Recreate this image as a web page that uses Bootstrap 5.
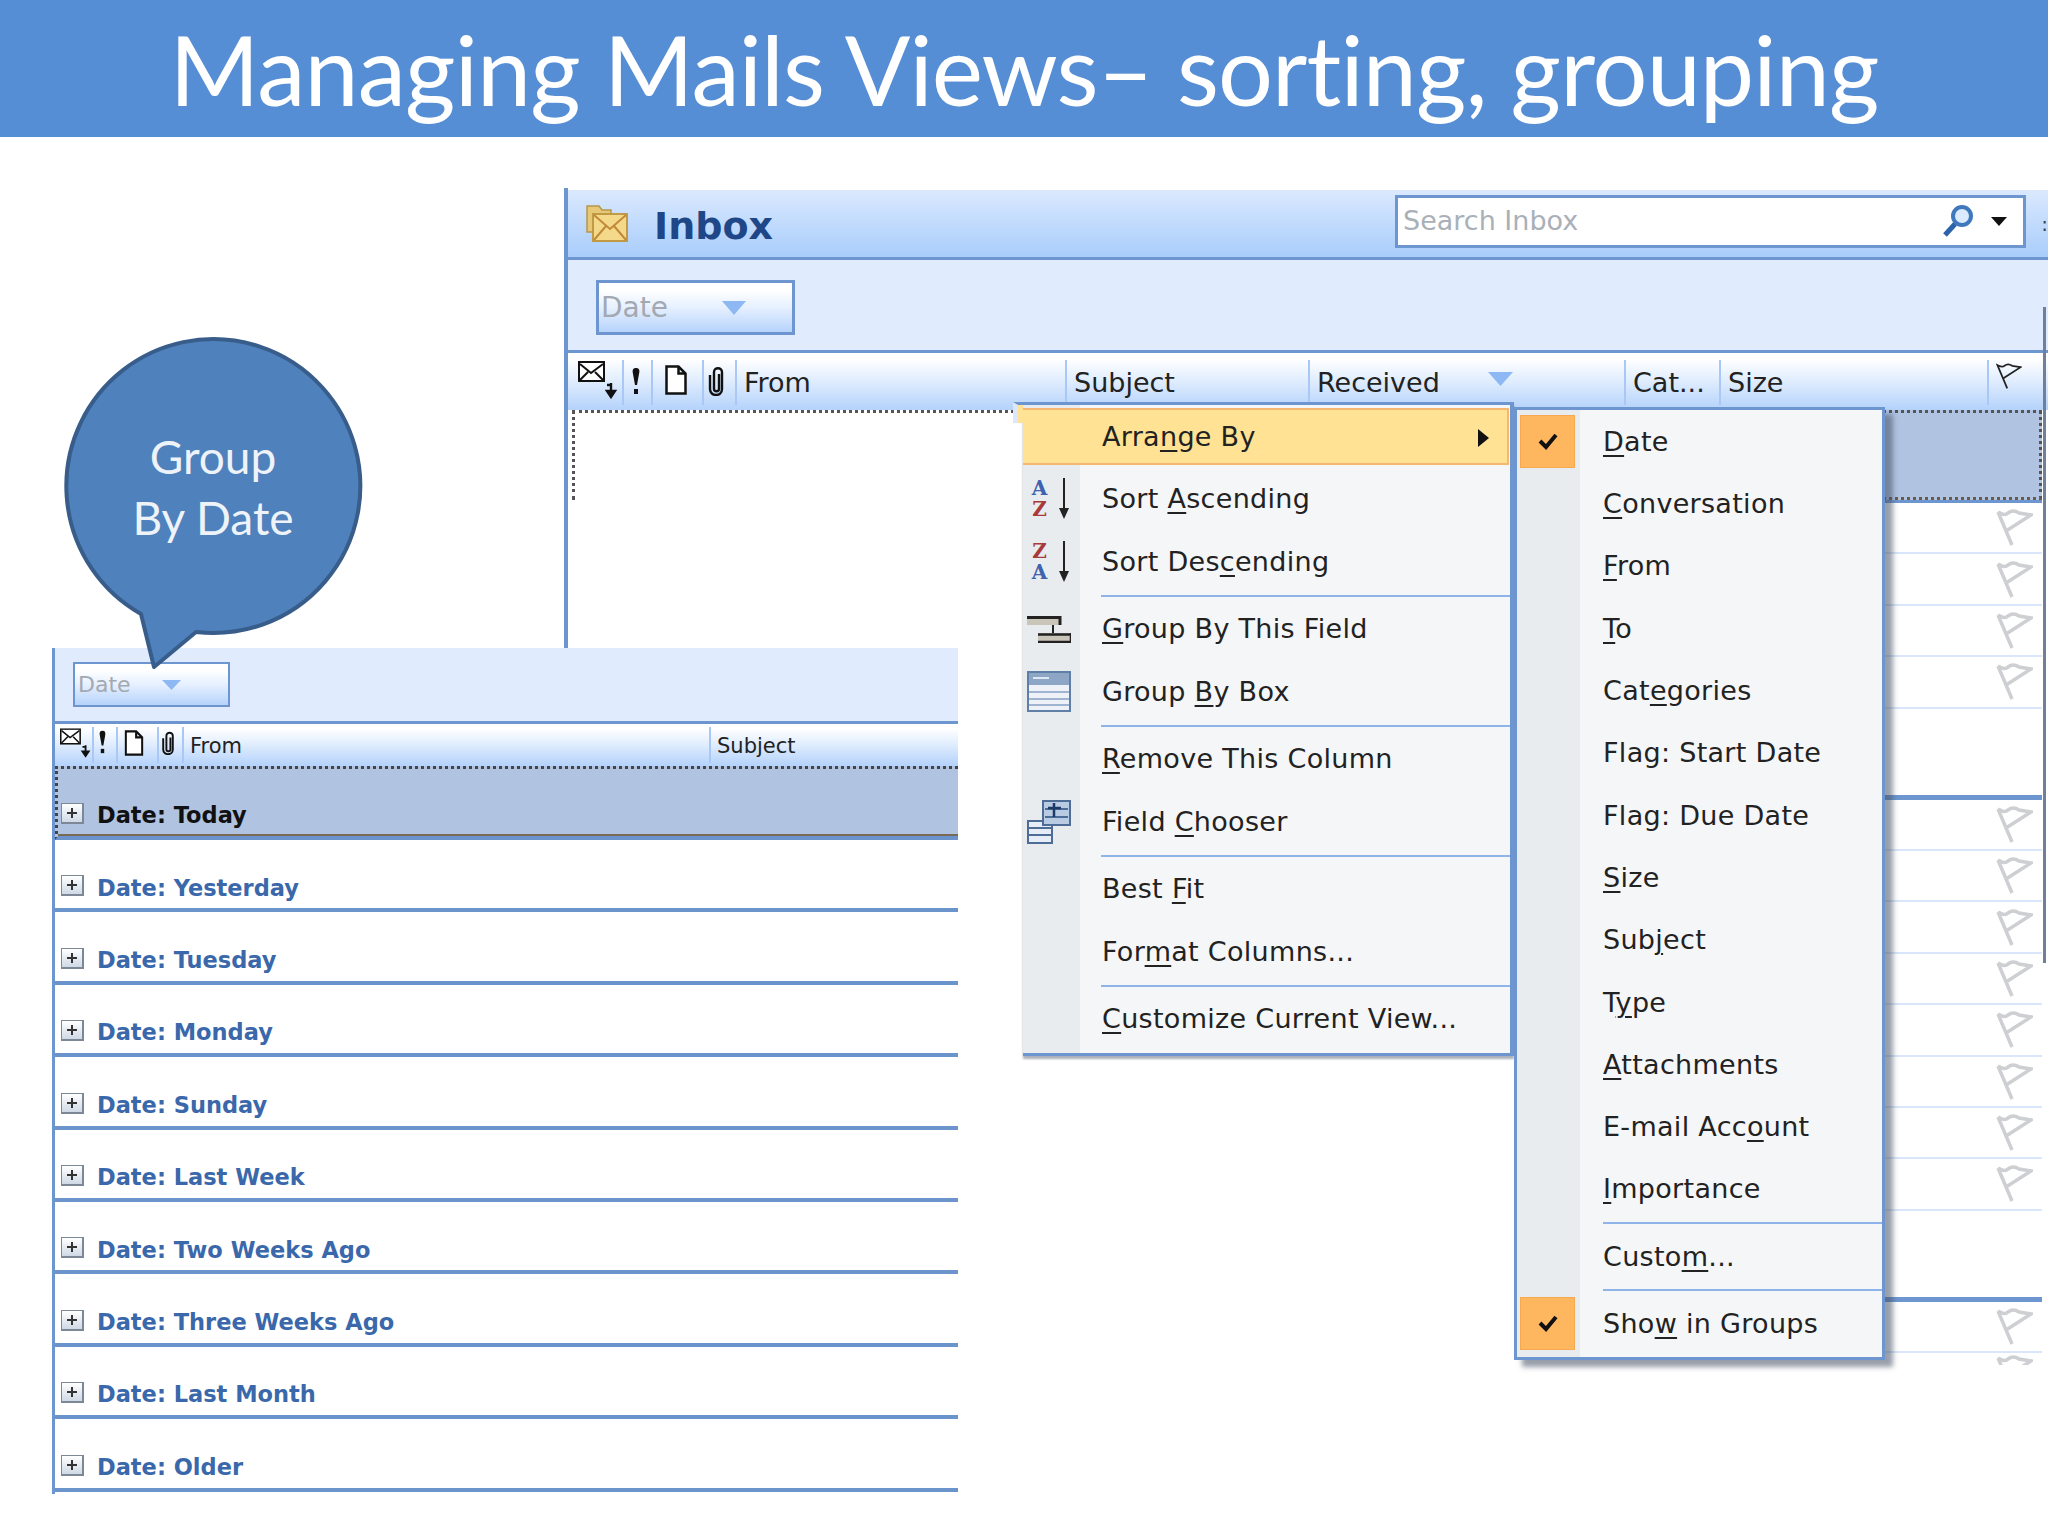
<!DOCTYPE html>
<html lang="en">
<head>
<meta charset="utf-8">
<title>Managing Mails Views</title>
<link href="https://cdn.jsdelivr.net/npm/bootstrap@5.3.0/dist/css/bootstrap.min.css" rel="stylesheet">
<style>
body{margin:0;background:#fff;font-family:"DejaVu Sans",sans-serif;color:#222}
.slide{position:relative;width:2048px;height:1536px;overflow:hidden;background:#fff}
.title-bar{height:137px;background:#558ed5;color:#fff;font-family:Lato,sans-serif;font-size:97px;line-height:137px;letter-spacing:-.9px;white-space:nowrap}
.inbox{left:564px;top:188px;width:1484px;height:1179px;padding-top:2px;border-left:4px solid #6d96d0;overflow:hidden;background:#fff}
.in-head{height:70px;background:linear-gradient(#dbe9fe,#a8cdfb);border-bottom:3px solid #6d96d0}
.in-title{font-size:38px;font-weight:700;color:#1f4788;line-height:1;margin:4px 0 0 25px}
.folder{margin:-4px 0 0 17px;width:44px;height:44px}
.search-box{width:631px;height:53px;margin:-5px 0 0 auto;background:#fff;border:3px solid #6d96d0;font-size:27px;color:#aab0b8;padding-left:5px}
.search-dots{width:22px;text-align:right;color:#445;font-size:20px;line-height:1}
.in-tools{height:93px;background:#e0ebfe;border-bottom:3px solid #6d96d0;padding-left:28px}
.view-btn{width:199px;height:55px;margin-top:5px;border:3px solid #6d96d0;background:linear-gradient(#fff 15%,#e6f0ff 50%,#b6d3fb);color:#a3a9b2;font-size:28px;padding-left:2px}
.tri-a{width:24px;height:14px;margin-left:54px}
.col-head{height:57px;background:linear-gradient(#fff 10%,#e3effe 45%,#b4d2fb);font-size:27px}
.col-cell{height:100%;padding:8px 0 0 9px;flex:none;color:#222;position:relative}
.col-cell+.col-cell::before{content:"";position:absolute;left:0;top:7px;bottom:5px;width:2px;background:#a9c8f5}
.w-mail{width:54px;padding-left:10px}.w-imp{width:29px}.w-doc{width:51px}.w-clip{width:33px;padding-left:6px}
.w-from,.w-subj,.w-recv,.w-cat,.w-size{padding-top:10px}
.w-from{width:330px}.w-subj{width:243px}.w-recv{width:316px}.w-cat{width:95px}.w-size{width:268px}.w-fl{width:53px}
.in-list{padding:0 6px 0 4px}
.sel-row{height:90px;margin-bottom:3px}
.sel-blank{border-top:3px dotted #555;border-left:3px dotted #555;background:#fff}
.sel-fill{width:560px;flex:none;background:#b0c4e2;border-top:3px dotted #555;border-right:3px dotted #555;border-bottom:3px dotted #6a5a4a;box-shadow:0 3px 0 #6d96d0}
.flag-row{height:51.4px;width:170px;border-bottom:2px solid #d9e6fb;padding-right:9px}
.flag-row svg{width:37px;height:37px}
.gap-row{height:91px;width:170px;border-bottom:5px solid #6d96d0}
.clip-row{height:12px;width:170px;overflow:hidden;padding:2px 9px 0 0}
.clip-row svg{width:37px;height:37px}
.scroll-edge{right:2px;top:119px;width:3px;height:656px;background:#6f7f9c}
.group-panel{left:52px;top:648px;width:906px;height:846px;background:#fff;border-left:3px solid #6d96d0}
.gp-tools{height:76px;background:#e0ebfe;border-bottom:3px solid #6d96d0;padding-left:18px}
.gp-btn{width:157px;height:45px;border:2px solid #6d96d0;background:linear-gradient(#fff 15%,#e6f0ff 50%,#b6d3fb);color:#a3a9b2;font-size:22px;padding-left:3px}
.tri-b{width:19px;height:10px;margin-left:31px}
.gp-head{height:42px;background:linear-gradient(#fff 10%,#e3effe 45%,#b4d2fb);font-size:21px}
.gc{height:100%;flex:none;padding:7px 0 0 8px;position:relative;color:#222}
.gc+.gc::before{content:"";position:absolute;left:0;top:3px;bottom:3px;width:2px;background:#a9c8f5}
.g1{width:37px;padding-left:5px}.g2{width:24px;padding-left:6px}.g3{width:41px;padding-left:8px}.g4{width:25px;padding-left:4px}.g5{width:527px}.g6{width:249px}
.gp-row{height:72.4px;padding:0 0 3px 6px;border-bottom:4px solid #6c94cc;font-size:22.5px;font-weight:700;color:#3a68ab}
.gp-row.now{height:74px;background:#b0c4e2;color:#111;border-top:3px dotted #444;border-left:3px dotted #444;padding-left:3px;box-shadow:inset 0 -3px 0 -1px #7a6a55}
.plus{width:23px;height:21px;margin:0 13px 9px 0;flex:none;border:1px solid #7d8896;border-right-width:2px;border-bottom-width:2px;background:linear-gradient(#fff,#cfd9e6)}
.plus svg{display:block;width:100%;height:100%}
.bubble{left:60px;top:335px;width:310px;height:340px;color:#eef3fa;font-family:Lato,sans-serif;font-size:46px;line-height:61px}
.bubble svg{left:0;top:0;width:100%;height:100%}
.bubble-text{left:0;top:91px;width:306px}
.ol-menu.dropdown-menu{min-width:0;border-radius:0;padding:0;margin:0;font-size:27px;letter-spacing:.3px;color:#222}
.menu-a{left:1023px;top:402px;width:491px;height:654px;border:0;border-top:3px solid #6d96d0;border-right:4px solid #6d96d0;border-bottom:3px solid #6d96d0;background:linear-gradient(90deg,#e9ecee 57px,#f5f6f8 57px);box-shadow:0 3px 2px rgba(70,80,100,.45)}
.menu-a::before{content:"";position:absolute;left:-10px;top:-3px;width:10px;height:21px;background:#ffe293;border-top:3px solid #6d96d0;border-left:5px solid #dbe7fc}
.menu-b{left:1514px;top:407px;width:371px;height:953px;border:3px solid #6d96d0;border-left-width:3px;background:linear-gradient(90deg,#e9ecee 63px,#f5f6f8 63px);box-shadow:8px 7px 5px rgba(70,80,100,.55)}
.ol-menu .dropdown-item{display:flex;align-items:center;padding:0;color:#222;background:none;white-space:nowrap}
.menu-a .dropdown-item{height:62.5px}
.menu-b .dropdown-item{height:62.3px}
.menu-a .dropdown-item.hot{height:57px;margin:3px 0 3px 0;width:486px;background:#ffe293;border:2px solid #f6b870;border-left:0;position:relative}
.menu-a .hot .m-tx,.menu-b .m-tx{padding-top:2px}
.m-ic{width:57px;flex:none;height:100%;display:flex;align-items:center;justify-content:center;padding-right:6px}
.m-tx{margin-left:22px}
.m-tx u{text-decoration-thickness:2px;text-underline-offset:4px}
.m-ck{width:55px;height:53px;margin-left:3px;flex:none;display:flex;align-items:center;justify-content:center}
.m-ck.on{background:#ffb75f;border:1px solid #f7a950}
.menu-b .m-tx{margin-left:28px}
.ol-menu .dropdown-divider{height:5px;margin:0;border:0;opacity:1;background:linear-gradient(#8fb4ea,#8fb4ea) 0 2px/100% 2px no-repeat}
.menu-a .dropdown-divider{margin-left:78px}
.menu-b .dropdown-divider{margin-left:86px}
.sub-tri{right:18px;top:19px;width:11px;height:18px}
.az{width:26px;font-family:"DejaVu Serif",serif;font-weight:700;font-size:20px;line-height:21px;text-align:center;letter-spacing:0}
.az .blu{color:#3c62b0}.az .red{color:#a93a3a}
.az-arrow{width:14px;height:42px;margin-left:4px}
</style>
</head>
<body>
<svg width="0" height="0" class="position-absolute">
  <symbol id="flag" viewBox="0 0 37 37"><path d="M16 36 2 3M2 3c4 2 7 4 10 1 4-3 8-2 11 0l12 2-25 16" fill="none" stroke="#cdcfd2" stroke-width="3.500"/></symbol>
  <symbol id="check" viewBox="0 0 20 18"><path d="M2 9l6 6L18 3" fill="none" stroke="#111" stroke-width="4"/></symbol>
  <symbol id="mail" viewBox="0 0 40 38"><rect x="1" y="1" width="25" height="19" fill="#fff" stroke="#111" stroke-width="2"/><path d="M2 3l11 9L25 3M2 19l8-8M25 19l-8-8" fill="none" stroke="#111" stroke-width="2"/><path d="M33 22v12M29 24h4M29 30l4 6 4-6z" fill="#111" stroke="#111" stroke-width="2.400"/></symbol>
  <symbol id="imp" viewBox="0 0 10 28"><path d="M5 1c3 0 4 2 3 6L6 18H4L2 7C1 3 2 1 5 1z" fill="#111"/><rect x="3" y="22" width="4" height="5" fill="#111"/></symbol>
  <symbol id="doc" viewBox="0 0 22 30"><path d="M1.500 1.500h12l7 7v20h-19zM13.500 1.500v7h7" fill="#fff" stroke="#111" stroke-width="2.500"/></symbol>
  <symbol id="clip" viewBox="0 0 16 30"><path d="M11 8v15c0 3-5 3-5 0V6c0-5 8-5 8 0v17c0 8-12 8-12 0V9" fill="none" stroke="#111" stroke-width="2.400"/></symbol>
  <symbol id="plus" viewBox="0 0 20 18"><path d="M10 4v10M5 9h10" stroke="#333" stroke-width="2"/></symbol>
  <symbol id="down" viewBox="0 0 14 42"><path d="M7 0v34" stroke="#222" stroke-width="2"/><path d="M2 30h10l-5 11z" fill="#222"/></symbol>
</svg>

<div class="slide">
  <header class="title-bar text-center">Managing Mails Views– sorting, grouping</header>

  <section class="inbox position-absolute">
    <div class="in-head d-flex align-items-center">
      <svg class="folder" viewBox="0 0 44 44"><path d="M2 6h12l3 4h9v22H2z" fill="#e6c877" stroke="#b6964c" stroke-width="1.500"/><rect x="8" y="14" width="34" height="27" fill="#f4d98a" stroke="#c09a45" stroke-width="2"/><path d="M9 15l16 14L41 15M9 40l12-14M41 40 29 26" fill="none" stroke="#c08a3a" stroke-width="2"/></svg>
      <span class="in-title">Inbox</span>
      <div class="search-box d-flex align-items-center">
        <span class="flex-grow-1">Search Inbox</span>
        <svg width="34" height="34" viewBox="0 0 34 34" class="me-3"><circle cx="21" cy="12" r="9" fill="#dbeafe" stroke="#3f78bd" stroke-width="4"/><path d="M14 20 4 31" stroke="#2d63a8" stroke-width="5"/></svg>
        <svg width="16" height="9" viewBox="0 0 16 9" class="me-3"><path d="M0 0h16L8 9z" fill="#111"/></svg>
      </div>
      <span class="search-dots">:</span>
    </div>
    <div class="in-tools d-flex align-items-center">
      <div class="view-btn d-flex align-items-center"><span>Date</span><svg class="tri-a" viewBox="0 0 24 14"><path d="M0 0h24L12 14z" fill="#8db8f3"/></svg></div>
    </div>
    <div class="col-head d-flex">
      <div class="col-cell w-mail"><svg width="40" height="38" style="display:block"><use href="#mail"/></svg></div>
      <div class="col-cell w-imp"><svg width="10" height="28" style="display:block;margin-top:6px"><use href="#imp"/></svg></div>
      <div class="col-cell w-doc"><svg width="22" height="30" style="display:block;margin:4px 0 0 5px"><use href="#doc"/></svg></div>
      <div class="col-cell w-clip"><svg width="16" height="30" style="display:block;margin-top:5px"><use href="#clip"/></svg></div>
      <div class="col-cell w-from">From</div>
      <div class="col-cell w-subj">Subject</div>
      <div class="col-cell w-recv d-flex">Received<svg width="25" height="14" viewBox="0 0 25 14" style="margin:9px 0 0 48px"><path d="M0 0h25L12.500 14z" fill="#8db8f3"/></svg></div>
      <div class="col-cell w-cat">Cat...</div>
      <div class="col-cell w-size">Size</div>
      <div class="col-cell w-fl"><svg width="26" height="30" viewBox="0 0 37 37" style="display:block"><path d="M16 36 2 3c4 2 7 4 10 1 4-3 8-2 11 0l12 2-25 16" fill="none" stroke="#222" stroke-width="2.500"/></svg></div>
    </div>
    <div class="in-list">
      <div class="sel-row d-flex"><div class="sel-blank flex-grow-1"></div><div class="sel-fill"></div></div>
      <div class="flag-row ms-auto d-flex align-items-center justify-content-end"><svg><use href="#flag"/></svg></div>
      <div class="flag-row ms-auto d-flex align-items-center justify-content-end"><svg><use href="#flag"/></svg></div>
      <div class="flag-row ms-auto d-flex align-items-center justify-content-end"><svg><use href="#flag"/></svg></div>
      <div class="flag-row ms-auto d-flex align-items-center justify-content-end"><svg><use href="#flag"/></svg></div>
      <div class="gap-row ms-auto"></div>
      <div class="flag-row ms-auto d-flex align-items-center justify-content-end"><svg><use href="#flag"/></svg></div>
      <div class="flag-row ms-auto d-flex align-items-center justify-content-end"><svg><use href="#flag"/></svg></div>
      <div class="flag-row ms-auto d-flex align-items-center justify-content-end"><svg><use href="#flag"/></svg></div>
      <div class="flag-row ms-auto d-flex align-items-center justify-content-end"><svg><use href="#flag"/></svg></div>
      <div class="flag-row ms-auto d-flex align-items-center justify-content-end"><svg><use href="#flag"/></svg></div>
      <div class="flag-row ms-auto d-flex align-items-center justify-content-end"><svg><use href="#flag"/></svg></div>
      <div class="flag-row ms-auto d-flex align-items-center justify-content-end"><svg><use href="#flag"/></svg></div>
      <div class="flag-row ms-auto d-flex align-items-center justify-content-end"><svg><use href="#flag"/></svg></div>
      <div class="gap-row ms-auto"></div>
      <div class="flag-row ms-auto d-flex align-items-center justify-content-end"><svg><use href="#flag"/></svg></div>
      <div class="clip-row ms-auto d-flex justify-content-end align-items-start"><svg><use href="#flag"/></svg></div>
    </div>
    <div class="scroll-edge position-absolute"></div>
  </section>

  <section class="group-panel position-absolute">
    <div class="gp-tools d-flex align-items-center">
      <div class="gp-btn d-flex align-items-center"><span>Date</span><svg class="tri-b" viewBox="0 0 19 10"><path d="M0 0h19L9.500 10z" fill="#8db8f3"/></svg></div>
    </div>
    <div class="gp-head d-flex">
      <div class="gc g1"><svg width="31" height="30" viewBox="0 0 40 38" style="display:block;margin-top:-3px"><use href="#mail"/></svg></div>
      <div class="gc g2"><svg width="9" height="24" style="display:block;margin-top:-1px" viewBox="0 0 10 28"><use href="#imp"/></svg></div>
      <div class="gc g3"><svg width="20" height="26" viewBox="0 0 22 30" style="display:block;margin-top:-1px"><use href="#doc"/></svg></div>
      <div class="gc g4"><svg width="14" height="24" viewBox="0 0 16 30" style="display:block"><use href="#clip"/></svg></div>
      <div class="gc g5">From</div>
      <div class="gc g6">Subject</div>
    </div>
    <div class="gp-row now d-flex align-items-end"><span class="plus"><svg><use href="#plus"/></svg></span><span>Date: Today</span></div>
    <div class="gp-row d-flex align-items-end"><span class="plus"><svg><use href="#plus"/></svg></span><span>Date: Yesterday</span></div>
    <div class="gp-row d-flex align-items-end"><span class="plus"><svg><use href="#plus"/></svg></span><span>Date: Tuesday</span></div>
    <div class="gp-row d-flex align-items-end"><span class="plus"><svg><use href="#plus"/></svg></span><span>Date: Monday</span></div>
    <div class="gp-row d-flex align-items-end"><span class="plus"><svg><use href="#plus"/></svg></span><span>Date: Sunday</span></div>
    <div class="gp-row d-flex align-items-end"><span class="plus"><svg><use href="#plus"/></svg></span><span>Date: Last Week</span></div>
    <div class="gp-row d-flex align-items-end"><span class="plus"><svg><use href="#plus"/></svg></span><span>Date: Two Weeks Ago</span></div>
    <div class="gp-row d-flex align-items-end"><span class="plus"><svg><use href="#plus"/></svg></span><span>Date: Three Weeks Ago</span></div>
    <div class="gp-row d-flex align-items-end"><span class="plus"><svg><use href="#plus"/></svg></span><span>Date: Last Month</span></div>
    <div class="gp-row d-flex align-items-end"><span class="plus"><svg><use href="#plus"/></svg></span><span>Date: Older</span></div>
  </section>

  <aside class="bubble position-absolute text-center">
    <svg class="position-absolute" viewBox="60 335 310 340"><path d="M196 632 154 667 141 614A147 147 0 1 1 196 632Z" fill="#4f81bd" stroke="#385d8a" stroke-width="4" stroke-linejoin="round"/></svg>
    <div class="bubble-text position-absolute">Group<br>By Date</div>
  </aside>

  <ul class="dropdown-menu show ol-menu menu-a position-absolute list-unstyled">
    <li class="dropdown-item hot"><span class="m-ic"></span><span class="m-tx">Arra<u>n</u>ge By</span><svg class="sub-tri position-absolute" viewBox="0 0 11 18"><path d="M0 0l11 9L0 18z" fill="#111"/></svg></li>
    <li class="dropdown-item"><span class="m-ic"><span class="az"><span class="blu d-block">A</span><span class="red d-block">Z</span></span><svg class="az-arrow"><use href="#down"/></svg></span><span class="m-tx">Sort <u>A</u>scending</span></li>
    <li class="dropdown-item"><span class="m-ic"><span class="az"><span class="red d-block">Z</span><span class="blu d-block">A</span></span><svg class="az-arrow"><use href="#down"/></svg></span><span class="m-tx">Sort Des<u>c</u>ending</span></li>
    <li><hr class="dropdown-divider"></li>
    <li class="dropdown-item"><span class="m-ic"><svg width="44" height="28" viewBox="0 0 44 28"><path d="M26 8v12" stroke="#222" stroke-width="2"/><rect y="1" width="33" height="9" fill="#c9c5b8"/><path d="M0 2.500h33M33 1v9" stroke="#222" stroke-width="3"/><rect x="11" y="18" width="33" height="10" fill="#c9c5b8"/><path d="M11 19.500h33M44 18v10M11 27h33" stroke="#222" stroke-width="2.500"/></svg></span><span class="m-tx"><u>G</u>roup By This Field</span></li>
    <li class="dropdown-item"><span class="m-ic"><svg width="44" height="41" viewBox="0 0 44 41"><rect x="1" y="1" width="42" height="39" fill="#eef2f8" stroke="#5f7fa6" stroke-width="2"/><rect x="2" y="2" width="40" height="12" fill="#8ea6c5"/><path d="M6 7h16" stroke="#dfe7f2" stroke-width="2"/><path d="M2 21h40M2 28h40M2 34h40" stroke="#9fb4d0" stroke-width="2"/></svg></span><span class="m-tx">Group <u>B</u>y Box</span></li>
    <li><hr class="dropdown-divider"></li>
    <li class="dropdown-item"><span class="m-ic"></span><span class="m-tx"><u>R</u>emove This Column</span></li>
    <li class="dropdown-item"><span class="m-ic"><svg width="44" height="44" viewBox="0 0 44 44"><rect x="1" y="21" width="24" height="22" fill="#e6edf6" stroke="#4d6d96" stroke-width="2"/><path d="M2 28h22M2 35h22" stroke="#4d6d96" stroke-width="2"/><rect x="16" y="1" width="27" height="24" fill="#b9cbe2" stroke="#4d6d96" stroke-width="2"/><path d="M18 9h23M18 17h23" stroke="#4d6d96" stroke-width="2"/><path d="M27 3v14M21 8h13" stroke="#1d3a66" stroke-width="2.500"/></svg></span><span class="m-tx">Field <u>C</u>hooser</span></li>
    <li><hr class="dropdown-divider"></li>
    <li class="dropdown-item"><span class="m-ic"></span><span class="m-tx">Best <u>F</u>it</span></li>
    <li class="dropdown-item"><span class="m-ic"></span><span class="m-tx">For<u>m</u>at Columns...</span></li>
    <li><hr class="dropdown-divider"></li>
    <li class="dropdown-item"><span class="m-ic"></span><span class="m-tx"><u>C</u>ustomize Current View...</span></li>
  </ul>

  <ul class="dropdown-menu show ol-menu menu-b position-absolute list-unstyled">
    <li class="dropdown-item"><span class="m-ck on"><svg width="20" height="18"><use href="#check"/></svg></span><span class="m-tx"><u>D</u>ate</span></li>
    <li class="dropdown-item"><span class="m-ck"></span><span class="m-tx"><u>C</u>onversation</span></li>
    <li class="dropdown-item"><span class="m-ck"></span><span class="m-tx"><u>F</u>rom</span></li>
    <li class="dropdown-item"><span class="m-ck"></span><span class="m-tx"><u>T</u>o</span></li>
    <li class="dropdown-item"><span class="m-ck"></span><span class="m-tx">Cat<u>e</u>gories</span></li>
    <li class="dropdown-item"><span class="m-ck"></span><span class="m-tx">Flag: Start Date</span></li>
    <li class="dropdown-item"><span class="m-ck"></span><span class="m-tx">Flag: Due Date</span></li>
    <li class="dropdown-item"><span class="m-ck"></span><span class="m-tx"><u>S</u>ize</span></li>
    <li class="dropdown-item"><span class="m-ck"></span><span class="m-tx">Sub<u>j</u>ect</span></li>
    <li class="dropdown-item"><span class="m-ck"></span><span class="m-tx">T<u>y</u>pe</span></li>
    <li class="dropdown-item"><span class="m-ck"></span><span class="m-tx"><u>A</u>ttachments</span></li>
    <li class="dropdown-item"><span class="m-ck"></span><span class="m-tx">E-mail Acc<u>o</u>unt</span></li>
    <li class="dropdown-item"><span class="m-ck"></span><span class="m-tx"><u>I</u>mportance</span></li>
    <li><hr class="dropdown-divider"></li>
    <li class="dropdown-item"><span class="m-ck"></span><span class="m-tx">Custo<u>m</u>...</span></li>
    <li><hr class="dropdown-divider"></li>
    <li class="dropdown-item"><span class="m-ck on"><svg width="20" height="18"><use href="#check"/></svg></span><span class="m-tx">Sho<u>w</u> in Groups</span></li>
  </ul>
</div>
<script src="https://cdn.jsdelivr.net/npm/bootstrap@5.3.0/dist/js/bootstrap.bundle.min.js"></script>
</body>
</html>
